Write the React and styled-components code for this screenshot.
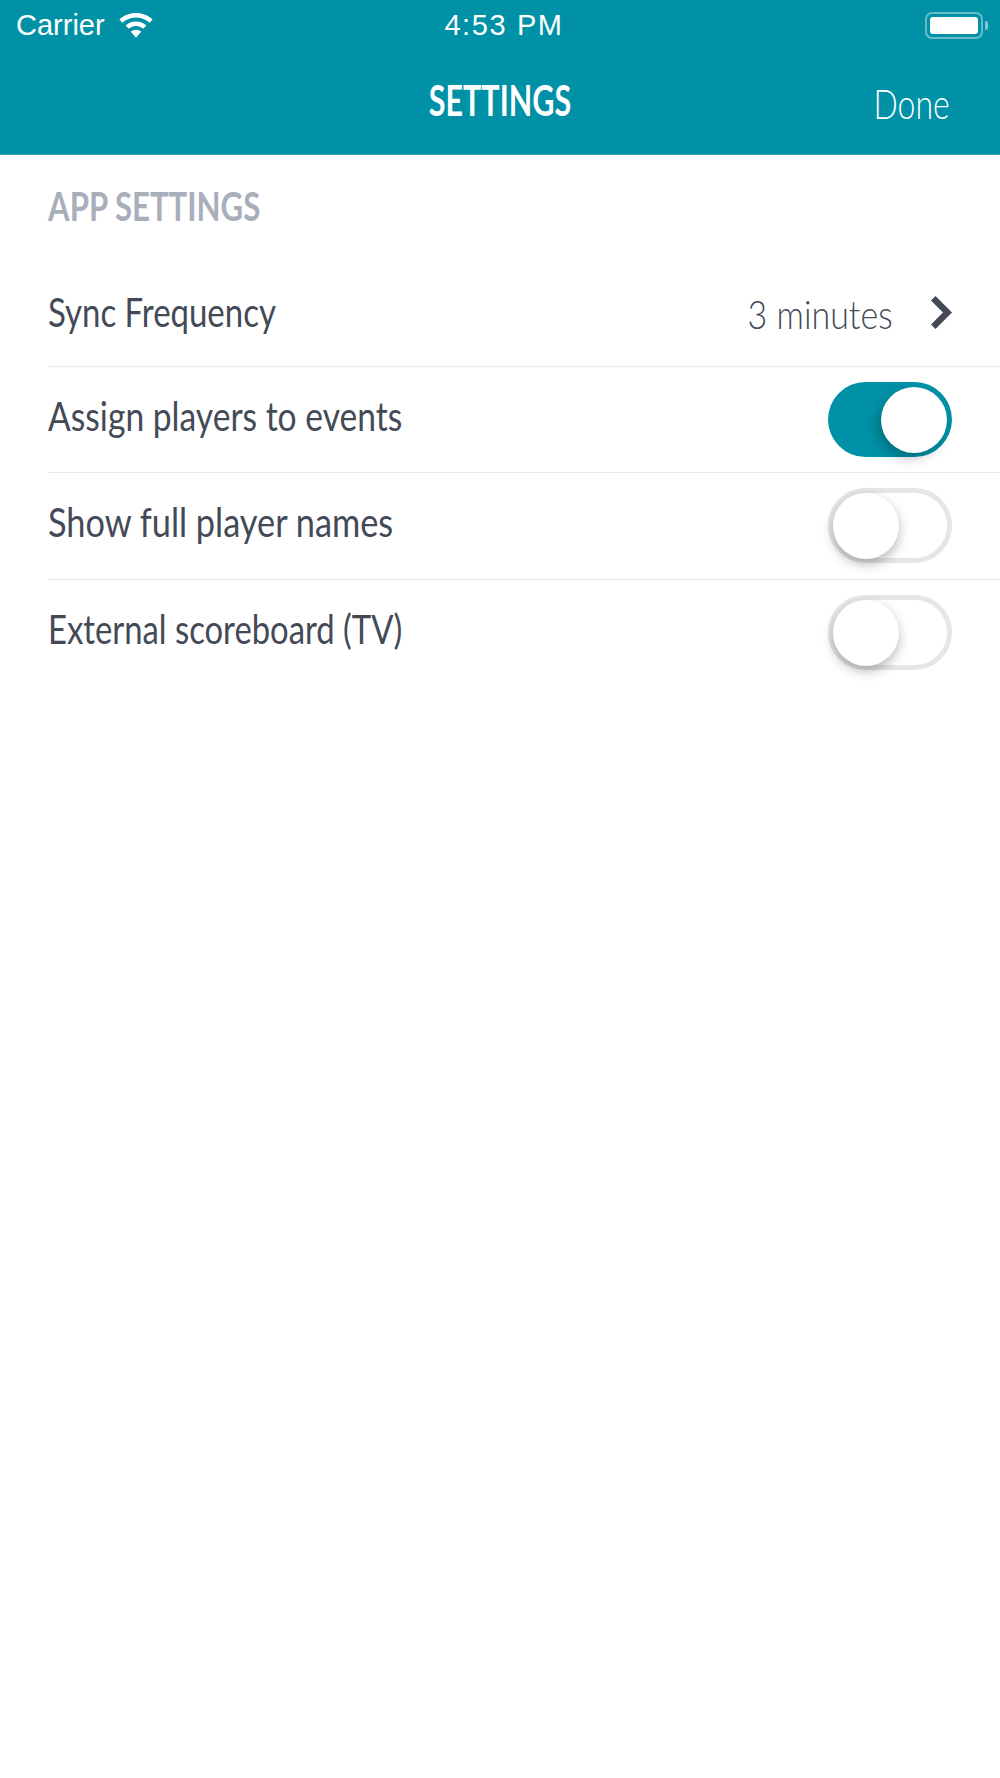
import React from 'react';
import styled, {createGlobalStyle} from 'styled-components';

const body = `Lato, "Liberation Sans", sans-serif`;

const Global = createGlobalStyle`
  html, body {
    margin: 0;
    padding: 0;
    background: #fff;
  }
  * {
    box-sizing: border-box;
  }
`

const Page = styled.div`
  width: 1000px;
  height: 1778px;
  background: #fff;
  overflow: hidden;
`

const Header = styled.header`
  height: 155px;
  background: #0091a6;
  border-bottom: 1px solid #2ba3b4;
  color: #fff;
`

const StatusBar = styled.div`
  height: 50px;
  display: grid;
  grid-template-columns: 1fr auto 1fr;
  align-items: center;
  padding: 0 12px 0 16px;
  font-family: "Liberation Sans", sans-serif;
  font-size: 29px;
`

const Carrier = styled.div`
  display: flex;
  align-items: center;
  gap: 14px;
`

const Clock = styled.div`
  letter-spacing: 1.6px;
  margin-left: 4px;
`

const Battery = styled.div`
  justify-self: end;
  display: flex;
  align-items: center;
  gap: 2px;
`

const BatteryBody = styled.div`
  width: 58px;
  height: 27px;
  padding: 3px;
  border: 2px solid rgba(255, 255, 255, 0.4);
  border-radius: 7px;

  div {
    height: 100%;
    background: #fff;
    border-radius: 3px;
  }
`

const BatteryTip = styled.div`
  width: 3px;
  height: 9px;
  background: rgba(255, 255, 255, 0.5);
  border-radius: 0 3px 3px 0;
`

const NavBar = styled.div`
  display: grid;
  grid-template-columns: 1fr auto 1fr;
  align-items: center;
  height: 104px;
  padding: 0 50px;
  font-family: ${body};
`

const NavTitle = styled.div`
  font-size: 42px;
  font-weight: 700;
  margin: -4px 0 0 0;
  transform: scaleX(0.727);
`

const NavAction = styled.div`
  justify-self: end;
  font-size: 41px;
  font-weight: 300;
  margin-top: 2px;
  transform: scaleX(0.78);
  transform-origin: right center;
`

const SectionTitle = styled.div`
  height: 105px;
  padding: 24px 0 0 48px;
`

const SectionText = styled.h2`
  margin: 0;
  font-family: ${body};
  font-size: 41px;
  line-height: 54px;
  font-weight: 700;
  color: #a9aebb;
  transform: scaleX(0.76);
  transform-origin: left center;
`

const RowList = styled.div`
  margin-left: 48px;
`

const Row = styled.div`
  height: 106.5px;
  display: flex;
  align-items: center;
  justify-content: space-between;
  padding-right: 48px;
  border-bottom: ${p => p.$last ? 'none' : '1px solid #e9e9ef'};
  font-family: ${body};
  font-size: 40px;
  color: #434a56;
`

// Lato squeezed to the width of the condensed face in the reference
const Label = styled.div`
  margin-top: ${p => p.$lift}px;
  transform: scaleX(${p => p.$fit});
  transform-origin: left center;
`

const RowValue = styled.div`
  display: flex;
  align-items: center;
  gap: 38px;
`

const ValueText = styled.div`
  font-weight: 300;
  margin-top: 2px;
  transform: scaleX(0.85);
  transform-origin: right center;
`

const Track = styled.div`
  width: 124px;
  height: 75px;
  display: flex;
  justify-content: ${p => p.$on ? 'flex-end' : 'flex-start'};
  border-radius: 38px;
  background: ${p => p.$on ? '#0091a6' : '#fff'};
  border: ${p => p.$on ? 'none' : '5px solid #e6e6e6'};
  padding: ${p => p.$on ? '5px' : '0'};
`

const Knob = styled.div`
  width: 66px;
  height: 66px;
  flex: none;
  border-radius: 50%;
  background: #fff;
  box-shadow: ${p => p.$on
    ? '-4px 6px 12px rgba(0, 0, 0, 0.22)'
    : '0 5px 12px rgba(0, 0, 0, 0.28)'};
`

const Wifi = () => (
    <svg width="34" height="25" viewBox="0 0 34 25" fill="#fff">
        <path d="M17 0C10.600 0 4.800 2.400.4 6.400l3 3.400C7 6.500 11.800 4.500 17 4.500s10 2 13.600 5.300l3-3.400C29.200 2.400 23.400 0 17 0z" />
        <path d="M17 8.400c-4 0-7.600 1.500-10.400 4l3 3.400c2-1.800 4.600-2.900 7.400-2.900s5.400 1.100 7.400 2.900l3-3.400c-2.800-2.500-6.400-4-10.400-4z" />
        <path d="M17 16.800c-2 0-3.700.7-5.100 1.900L17 24.800l5.100-6.100c-1.400-1.200-3.100-1.900-5.100-1.900z" />
    </svg>
);

const Chevron = () => (
    <svg width="21" height="33" viewBox="0 0 21 33" fill="#434a56">
        <path d="M4.500 0L21 16.500 4.500 33 0 28.500 12 16.500 0 4.500z" />
    </svg>
);

const Toggle = ({on}) => (
    <Track $on={on}>
        <Knob $on={on} />
    </Track>
);

const App = () => {
    return (
        <Page>
            <Global />
            <Header>
                <StatusBar>
                    <Carrier>Carrier <Wifi /></Carrier>
                    <Clock>4:53 PM</Clock>
                    <Battery>
                        <BatteryBody><div /></BatteryBody>
                        <BatteryTip />
                    </Battery>
                </StatusBar>
                <NavBar>
                    <div />
                    <NavTitle>SETTINGS</NavTitle>
                    <NavAction>Done</NavAction>
                </NavBar>
            </Header>
            <SectionTitle>
                <SectionText>APP SETTINGS</SectionText>
            </SectionTitle>
            <RowList>
                <Row>
                    <Label $fit={0.824} $lift={-1}>Sync Frequency</Label>
                    <RowValue><ValueText>3 minutes</ValueText><Chevron /></RowValue>
                </Row>
                <Row>
                    <Label $fit={0.84} $lift={-7}>Assign players to events</Label>
                    <Toggle on />
                </Row>
                <Row>
                    <Label $fit={0.858} $lift={-7}>Show full player names</Label>
                    <Toggle />
                </Row>
                <Row $last>
                    <Label $fit={0.82} $lift={-8}>External scoreboard (TV)</Label>
                    <Toggle />
                </Row>
            </RowList>
        </Page>
    );
};

export default App;
